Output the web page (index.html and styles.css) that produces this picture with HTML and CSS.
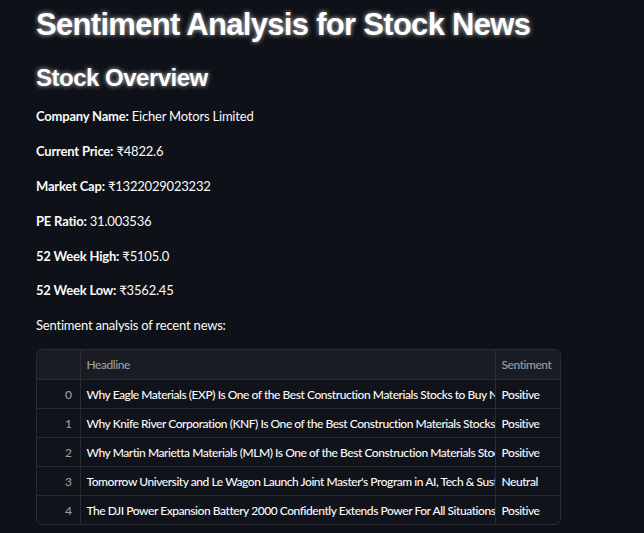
FILE: index.html
```html
<!DOCTYPE html>
<html>
<head>
<meta charset="utf-8">
<link rel="stylesheet" href="styles.css">
</head>
<body>
<main class="page">
  <h1 class="title">Sentiment Analysis for Stock News</h1>
  <h2 class="subtitle">Stock Overview</h2>
  <p class="line"><b>Company Name:</b> Eicher Motors Limited</p>
  <p class="line"><b>Current Price:</b> ₹4822.6</p>
  <p class="line"><b>Market Cap:</b> ₹1322029023232</p>
  <p class="line"><b>PE Ratio:</b> 31.003536</p>
  <p class="line"><b>52 Week High:</b> ₹5105.0</p>
  <p class="line"><b>52 Week Low:</b> ₹3562.45</p>
  <p class="line last">Sentiment analysis of recent news:</p>
  <div class="frame">
    <table class="grid">
      <colgroup><col class="c-idx"><col class="c-head"><col class="c-sent"></colgroup>
      <thead>
        <tr><th class="idx"></th><th>Headline</th><th>Sentiment</th></tr>
      </thead>
      <tbody>
        <tr><td class="idx">0</td><td>Why Eagle Materials (EXP) Is One of the Best Construction Materials Stocks to Buy Now</td><td>Positive</td></tr>
        <tr><td class="idx">1</td><td>Why Knife River Corporation (KNF) Is One of the Best Construction Materials Stocks to Buy Now</td><td>Positive</td></tr>
        <tr><td class="idx">2</td><td>Why Martin Marietta Materials (MLM) Is One of the Best Construction Materials Stocks to Buy Now</td><td>Positive</td></tr>
        <tr><td class="idx">3</td><td>Tomorrow University and Le Wagon Launch Joint Master's Program in AI, Tech &amp; Sustainability</td><td>Neutral</td></tr>
        <tr><td class="idx">4</td><td>The DJI Power Expansion Battery 2000 Confidently Extends Power For All Situations</td><td>Positive</td></tr>
      </tbody>
    </table>
  </div>
</main>
</body>
</html>
```
FILE: styles.css
```css
html, body {
  margin: 0;
  padding: 0;
  background: #0e1117;
  color: #fafafa;
  font-family: Lato, "Open Sans", sans-serif;
}
.page {
  padding: 7px 36px 0 36px;
  display: flex;
  flex-direction: column;
}
.title {
  font-family: "Liberation Sans", Arial, sans-serif;
  font-weight: 700;
  font-size: 31px;
  letter-spacing: -0.7px;
  line-height: 36px;
  margin: 0;
  color: #ffffff;
  text-shadow: 0 0 5px rgba(255,255,255,0.75);
}
.subtitle {
  font-family: "Liberation Sans", Arial, sans-serif;
  font-weight: 700;
  font-size: 24px;
  letter-spacing: -0.5px;
  line-height: 28px;
  margin: 21px 0 14px 0;
  color: #ffffff;
  text-shadow: 0 0 5px rgba(255,255,255,0.75);
}
.line {
  font-size: 13px;
  letter-spacing: -0.2px;
  line-height: 21px;
  margin: 0 0 13.9px 0;
}
.line.last { margin-bottom: 13px; }
.line b { font-weight: 700; }
.frame {
  width: 523px;
  border: 1px solid #2a2c35;
  border-radius: 6px;
  overflow: hidden;
  background: #10131a;
}
.grid {
  width: 100%;
  border-collapse: collapse;
  table-layout: fixed;
  font-size: 12px;
  font-weight: 500;
  letter-spacing: -0.45px;
}
.c-idx { width: 43px; }
.c-sent { width: 65px; }
.grid th, .grid td {
  white-space: nowrap;
  overflow: hidden;
  text-overflow: clip;
  text-align: left;
  padding: 0 6px;
  border-left: 1px solid #2a2c35;
  border-top: 1px solid #2a2c35;
}
.grid th:first-child, .grid td:first-child { border-left: none; }
.grid thead th {
  height: 29px;
  border-top: none;
  background: #1a1c24;
  color: #9a9da6;
  font-weight: 500;
}
.grid td {
  height: 28px;
  color: #fafafa;
}
.grid .idx {
  text-align: right;
  padding-right: 8px;
  color: #9a9da6;
}
```
